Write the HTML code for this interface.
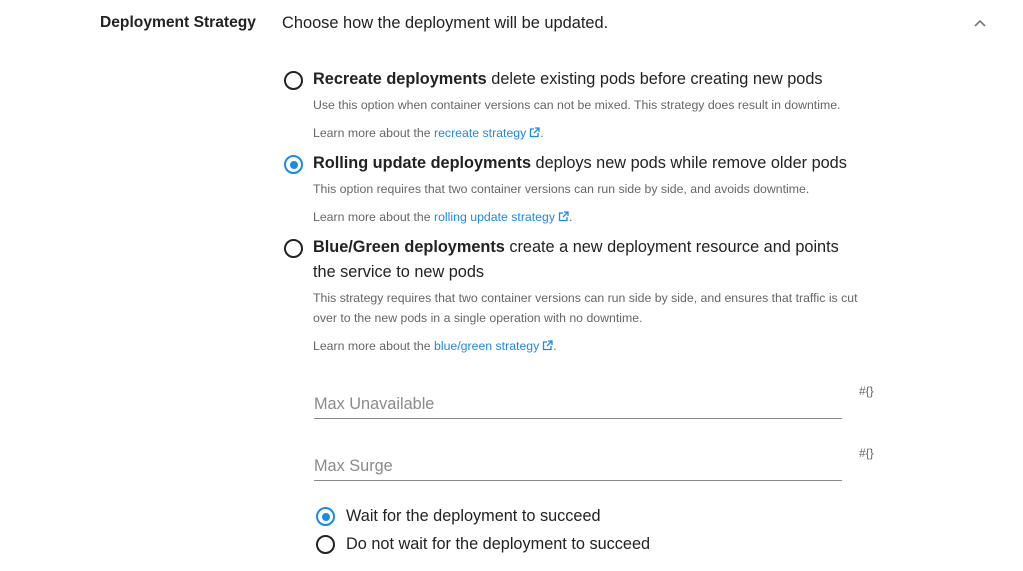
<!DOCTYPE html>
<html><head><meta charset="utf-8"><style>
body{margin:0;width:1023px;height:571px;background:#fff;font-family:"Liberation Sans",sans-serif;position:relative;overflow:hidden;color:#222}
.a{position:absolute;white-space:nowrap}
.m{font-size:16.3px;color:#222}
.d{font-size:12.3px;color:#666}
.l{color:#1e88e5}
.r{position:absolute;width:15px;height:15px;border:2px solid #222;border-radius:50%;box-sizing:content-box}
.r.on{border-color:#1e88e5}
.r.on:after{content:"";position:absolute;left:3.5px;top:3.5px;width:8px;height:8px;border-radius:50%;background:#1e88e5}
.ln{position:absolute;left:314px;width:528px;height:1px;background:#8a8a8a}
.ph{font-size:16.3px;color:#8a8a8a}
.h{font-size:12px;color:#666}
svg.e{vertical-align:-1px;margin-left:3px}
</style></head><body>
<div class="a" style="left:100px;top:14px;font-size:15.6px;font-weight:bold">Deployment Strategy</div>
<div class="a" style="left:282px;top:14px;font-size:16.4px">Choose how the deployment will be updated.</div>
<svg class="a" style="left:973px;top:19px" width="14" height="10"><path d="M2 7 L7 2 L12 7" fill="none" stroke="#777" stroke-width="1.6"/></svg>

<div class="r" style="left:284px;top:71px"></div>
<div class="a m" style="left:313px;top:70px"><b>Recreate deployments</b> delete existing pods before creating new pods</div>
<div class="a d" style="left:313px;top:98px">Use this option when container versions can not be mixed. This strategy does result in downtime.</div>
<div class="a d" style="left:313px;top:126px">Learn more about the <span class="l">recreate strategy<svg class="e" width="11" height="11"><path d="M5 2H1.5V9.5H9V6M6 1H10V5M10 1L5 6" fill="none" stroke="#1e88e5" stroke-width="1.3"/></svg></span>.</div>

<div class="r on" style="left:284px;top:155px"></div>
<div class="a m" style="left:313px;top:154px"><b>Rolling update deployments</b> deploys new pods while remove older pods</div>
<div class="a d" style="left:313px;top:182px">This option requires that two container versions can run side by side, and avoids downtime.</div>
<div class="a d" style="left:313px;top:210px">Learn more about the <span class="l">rolling update strategy<svg class="e" width="11" height="11"><path d="M5 2H1.5V9.5H9V6M6 1H10V5M10 1L5 6" fill="none" stroke="#1e88e5" stroke-width="1.3"/></svg></span>.</div>

<div class="r" style="left:284px;top:239px"></div>
<div class="a m" style="left:313px;top:238px"><b>Blue/Green deployments</b> create a new deployment resource and points</div>
<div class="a m" style="left:313px;top:263px">the service to new pods</div>
<div class="a d" style="left:313px;top:291px">This strategy requires that two container versions can run side by side, and ensures that traffic is cut</div>
<div class="a d" style="left:313px;top:311px">over to the new pods in a single operation with no downtime.</div>
<div class="a d" style="left:313px;top:339px">Learn more about the <span class="l">blue/green strategy<svg class="e" width="11" height="11"><path d="M5 2H1.5V9.5H9V6M6 1H10V5M10 1L5 6" fill="none" stroke="#1e88e5" stroke-width="1.3"/></svg></span>.</div>

<div class="a ph" style="left:314px;top:395px">Max Unavailable</div>
<div class="ln" style="top:418px"></div>
<div class="a h" style="left:859px;top:384px">#{}</div>
<div class="a ph" style="left:314px;top:457px">Max Surge</div>
<div class="ln" style="top:480px"></div>
<div class="a h" style="left:859px;top:446px">#{}</div>

<div class="r on" style="left:316px;top:507px"></div>
<div class="a m" style="left:346px;top:507px">Wait for the deployment to succeed</div>
<div class="r" style="left:316px;top:535px"></div>
<div class="a m" style="left:346px;top:535px">Do not wait for the deployment to succeed</div>
</body></html>
